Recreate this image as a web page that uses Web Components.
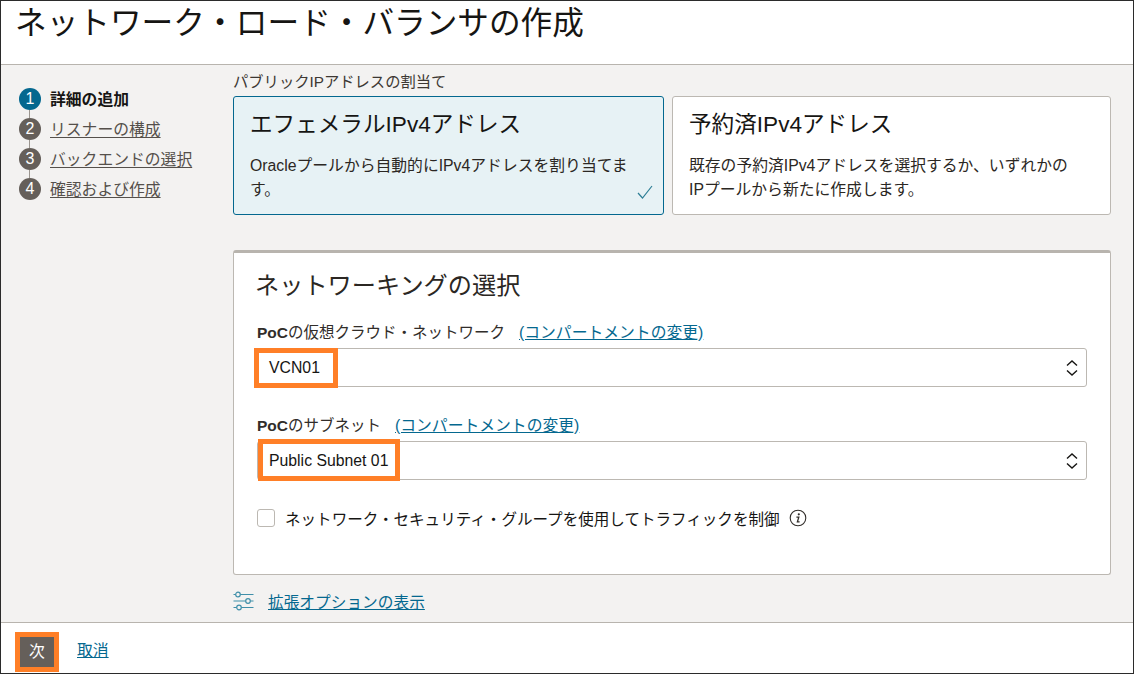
<!DOCTYPE html>
<html lang="ja">
<head>
<meta charset="utf-8">
<title>ネットワーク・ロード・バランサの作成</title>
<style>
  html, body { margin: 0; height: 100%; background: #fff; }
  body { font-family: "Liberation Sans", "Noto Sans CJK JP", sans-serif; color: #161513; }
</style>
</head>
<body>
<lb-page>
  <h-title slot="header">ネットワーク・ロード・バランサの作成</h-title>
  <step-list slot="side">
    <step-item num="1" active>詳細の追加</step-item>
    <step-item num="2">リスナーの構成</step-item>
    <step-item num="3">バックエンドの選択</step-item>
    <step-item num="4" last>確認および作成</step-item>
  </step-list>
  <div slot="main">
    <choice-group label="パブリックIPアドレスの割当て">
      <choice-card selected heading="エフェメラルIPv4アドレス">Oracleプールから自動的にIPv4アドレスを割り当てます。</choice-card>
      <choice-card heading="予約済IPv4アドレス">既存の予約済IPv4アドレスを選択するか、いずれかのIPプールから新たに作成します。</choice-card>
    </choice-group>
    <net-panel heading="ネットワーキングの選択">
      <select-field scope="PoC" label="の仮想クラウド・ネットワーク" value="VCN01" mark-left="-4" mark-top="-1" mark-width="84"></select-field>
      <select-field scope="PoC" label="のサブネット" value="Public Subnet 01" mark-left="0" mark-top="-3" mark-width="142"></select-field>
      <check-row>ネットワーク・セキュリティ・グループを使用してトラフィックを制御</check-row>
    </net-panel>
    <advanced-link>拡張オプションの表示</advanced-link>
  </div>
  <wizard-footer slot="footer"></wizard-footer>
</lb-page>

<script>
/**
 * PAGE SHELL
 * */

class LbPage extends HTMLElement {
  constructor() {
    super();
    const shadow = this.attachShadow({ mode: "open" });
    shadow.innerHTML = `
      <style>
        :host { display: flex; flex-direction: column; box-sizing: border-box; height: 674px; width: 1134px;
          border: 1px solid #2b2b2b; background: #f3f2f1; overflow: hidden; }
        header { height: 63px; background: #fff; border-bottom: 1px solid #b8b4ae; flex: none; }
        .body { flex: 1; display: flex; min-height: 0; }
        aside { width: 232px; flex: none; }
        main { flex: 1; min-width: 0; padding-right: 22px; }
        footer { flex: none; height: 50px; background: #fff; border-top: 1px solid #b8b4ae; }
      </style>
      <header><slot name="header"></slot></header>
      <div class="body">
        <aside><slot name="side"></slot></aside>
        <main><slot name="main"></slot></main>
      </div>
      <footer><slot name="footer"></slot></footer>
    `;
  }
}
customElements.define("lb-page", LbPage);

class HTitle extends HTMLElement {
  constructor() {
    super();
    const shadow = this.attachShadow({ mode: "open" });
    shadow.innerHTML = `
      <style>
        :host { display: block; padding: 1px 0 0 14px; font-size: 31.65px; line-height: 42px; color: #161513; white-space: nowrap; }
      </style>
      <slot></slot>
    `;
  }
}
customElements.define("h-title", HTitle);

/**
 * STEPS
 * */

class StepList extends HTMLElement {
  constructor() {
    super();
    const shadow = this.attachShadow({ mode: "open" });
    shadow.innerHTML = `
      <style>
        :host { display: flex; flex-direction: column; padding: 19px 0 0 18px; }
      </style>
      <slot></slot>
    `;
  }
}
customElements.define("step-list", StepList);

class StepItem extends HTMLElement {
  constructor() {
    super();
    const shadow = this.attachShadow({ mode: "open" });
    const active = this.hasAttribute("active");
    const last = this.hasAttribute("last");
    shadow.innerHTML = `
      <style>
        :host { display: flex; align-items: center; gap: 9px; height: 30px; font-size: 15.8px; white-space: nowrap; }
        .num { position: relative; width: 22px; height: 22px; border-radius: 50%; flex: none; color: #fff;
          background: ${active ? "#04688f" : "#655f5a"}; font-size: 16px; line-height: 22px; text-align: center; }
        .num::after { content: ""; position: absolute; left: 10px; top: 22px; width: 1px; height: 8px; background: #9b9690;
          display: ${last ? "none" : "block"}; }
        .text { color: ${active ? "#161513" : "#55504b"}; font-weight: ${active ? "700" : "400"};
          text-decoration: ${active ? "none" : "underline"}; text-underline-offset: 2px; position: relative; top: -1px; }
      </style>
      <span class="num">${this.getAttribute("num")}</span>
      <span class="text"><slot></slot></span>
    `;
  }
}
customElements.define("step-item", StepItem);

/**
 * CHOICE CARDS
 * */

class ChoiceGroup extends HTMLElement {
  constructor() {
    super();
    const shadow = this.attachShadow({ mode: "open" });
    shadow.innerHTML = `
      <style>
        :host { display: block; font-size: 15.3px; color: #3d3833; }
        .label { line-height: 22px; margin-top: 6px; margin-bottom: 3px; white-space: nowrap; }
        .cards { display: grid; grid-template-columns: 431px 439px; gap: 8px; height: 119px; }
      </style>
      <div class="label">${this.getAttribute("label")}</div>
      <div class="cards"><slot></slot></div>
    `;
  }
}
customElements.define("choice-group", ChoiceGroup);

class ChoiceCard extends HTMLElement {
  constructor() {
    super();
    const shadow = this.attachShadow({ mode: "open" });
    const selected = this.hasAttribute("selected");
    shadow.innerHTML = `
      <style>
        :host { display: block; position: relative; box-sizing: border-box; border-radius: 3px; padding: 9px 30px 0 16px;
          border: 1px solid ${selected ? "#04688f" : "#bcb8b2"}; background: ${selected ? "#e7f2f5" : "#fff"}; color: #161513; }
        .head { font-size: 22.6px; line-height: 38px; white-space: nowrap; }
        .desc { font-size: 15.8px; line-height: 24px; margin-top: 10px; color: #2b2723; }
        svg { position: absolute; right: 10px; bottom: 15px; }
      </style>
      <div class="head">${this.getAttribute("heading")}</div>
      <div class="desc"><slot></slot></div>
      ${selected ? `<svg width="16" height="14" viewBox="0 0 16 14"><path d="M1 8 L5.5 13 L15 1" fill="none" stroke="#2f7f96" stroke-width="1.2"/></svg>` : ""}
    `;
  }
}
customElements.define("choice-card", ChoiceCard);

/**
 * NETWORK PANEL
 * */

class NetPanel extends HTMLElement {
  constructor() {
    super();
    const shadow = this.attachShadow({ mode: "open" });
    shadow.innerHTML = `
      <style>
        :host { display: flex; flex-direction: column; box-sizing: border-box; margin-top: 35px; width: 878px; height: 325px; background: #fff;
          border: 1px solid #bcb8b2; border-top: 3px solid #b8b4ae; border-radius: 3px; padding: 15px 23px 0 18px; }
        h2 { margin: 0 0 0 3px; font-size: 24.2px; font-weight: 400; line-height: 36px; color: #2b2723; white-space: nowrap; }
      </style>
      <h2>${this.getAttribute("heading")}</h2>
      <slot></slot>
    `;
  }
}
customElements.define("net-panel", NetPanel);

class SelectField extends HTMLElement {
  constructor() {
    super();
    const shadow = this.attachShadow({ mode: "open" });
    const markLeft = this.getAttribute("mark-left");
    const markTop = this.getAttribute("mark-top");
    const markWidth = this.getAttribute("mark-width");
    shadow.innerHTML = `
      <style>
        :host { display: block; margin: 17px 0 10px 5px; font-size: 15.5px; color: #161513; }
        .label { line-height: 24px; margin-bottom: 3px; white-space: nowrap; display: flex; gap: 14px; align-items: baseline; }
        .label span { color: #312d2a; }
        b { font-weight: 700; }
        a { color: #04688f; text-decoration: underline; font-size: 15.8px; }
        .box { position: relative; height: 39px; box-sizing: border-box; border: 1px solid #bcb8b2; border-radius: 3px;
          display: flex; align-items: center; justify-content: space-between; padding: 0 6px 0 11px; font-size: 15.8px; background: #fff; }
        .mark { position: absolute; box-sizing: border-box; border: 5px solid #ff7f27; width: ${markWidth}px;
          left: ${markLeft}px; top: ${markTop}px; bottom: -2px; pointer-events: none; }
        svg { display: block; }
      </style>
      <div class="label"><span><b>${this.getAttribute("scope")}</b>${this.getAttribute("label")}</span><a href="#">(コンパートメントの変更)</a></div>
      <div class="box">
        <span>${this.getAttribute("value")}</span>
        <svg width="16" height="20" viewBox="0 0 16 20"><path d="M3 7.5 L8 3 L13 7.5 M3 12.5 L8 17 L13 12.5" fill="none" stroke="#161513" stroke-width="1.4"/></svg>
        <div class="mark"></div>
      </div>
    `;
  }
}
customElements.define("select-field", SelectField);

class CheckRow extends HTMLElement {
  constructor() {
    super();
    const shadow = this.attachShadow({ mode: "open" });
    shadow.innerHTML = `
      <style>
        :host { display: flex; align-items: center; margin: 15px 0 0 5px; font-size: 15.55px; color: #161513; white-space: nowrap; height: 26px; }
        .box { width: 18px; height: 18px; box-sizing: border-box; border: 1px solid #bcb8b2; border-radius: 3px; margin-right: 10px; flex: none; background: #fff; }
        svg { margin-left: 9px; flex: none; }
      </style>
      <span class="box"></span>
      <span><slot></slot></span>
      <svg width="18" height="18" viewBox="0 0 18 18">
        <circle cx="9" cy="9" r="7.8" fill="none" stroke="#312d2a" stroke-width="1.1"/>
        <circle cx="9.8" cy="5.3" r="1.1" fill="#312d2a"/>
        <path d="M7.4 8.2 H9.8 L8.4 12.8 H10.6" fill="none" stroke="#312d2a" stroke-width="1.3"/>
      </svg>
    `;
  }
}
customElements.define("check-row", CheckRow);

class AdvancedLink extends HTMLElement {
  constructor() {
    super();
    const shadow = this.attachShadow({ mode: "open" });
    shadow.innerHTML = `
      <style>
        :host { display: flex; align-items: center; gap: 14px; margin-top: 14px; font-size: 15.7px; height: 24px; white-space: nowrap; }
        a { color: #04688f; text-decoration: underline; }
      </style>
      <svg width="21" height="20" viewBox="0 0 21 20" fill="none" stroke="#3f8fa9" stroke-width="1.2">
        <path d="M0.5 3.5 H2.7 M7.3 3.5 H20.5 M0.5 10 H12.7 M17.3 10 H20.5 M0.5 16.5 H3.7 M8.3 16.5 H20.5"/>
        <circle cx="5" cy="3.5" r="2.3"/><circle cx="15" cy="10" r="2.3"/><circle cx="6" cy="16.5" r="2.3"/>
      </svg>
      <a href="#"><slot></slot></a>
    `;
  }
}
customElements.define("advanced-link", AdvancedLink);

/**
 * FOOTER
 * */

class WizardFooter extends HTMLElement {
  constructor() {
    super();
    const shadow = this.attachShadow({ mode: "open" });
    shadow.innerHTML = `
      <style>
        :host { display: flex; align-items: center; gap: 18px; height: 100%; padding-left: 14px; font-size: 15.8px; }
        .btn { width: 44px; height: 40px; box-sizing: border-box; border: 5px solid #ff7f27; background: #655f5a; color: #fff;
          display: flex; align-items: center; justify-content: center; margin-top: 7px; padding-bottom: 2px; }
        a { color: #04688f; text-decoration: underline; margin-top: 3px; }
      </style>
      <div class="btn">次</div>
      <a href="#">取消</a>
    `;
  }
}
customElements.define("wizard-footer", WizardFooter);
</script>
</body>
</html>
